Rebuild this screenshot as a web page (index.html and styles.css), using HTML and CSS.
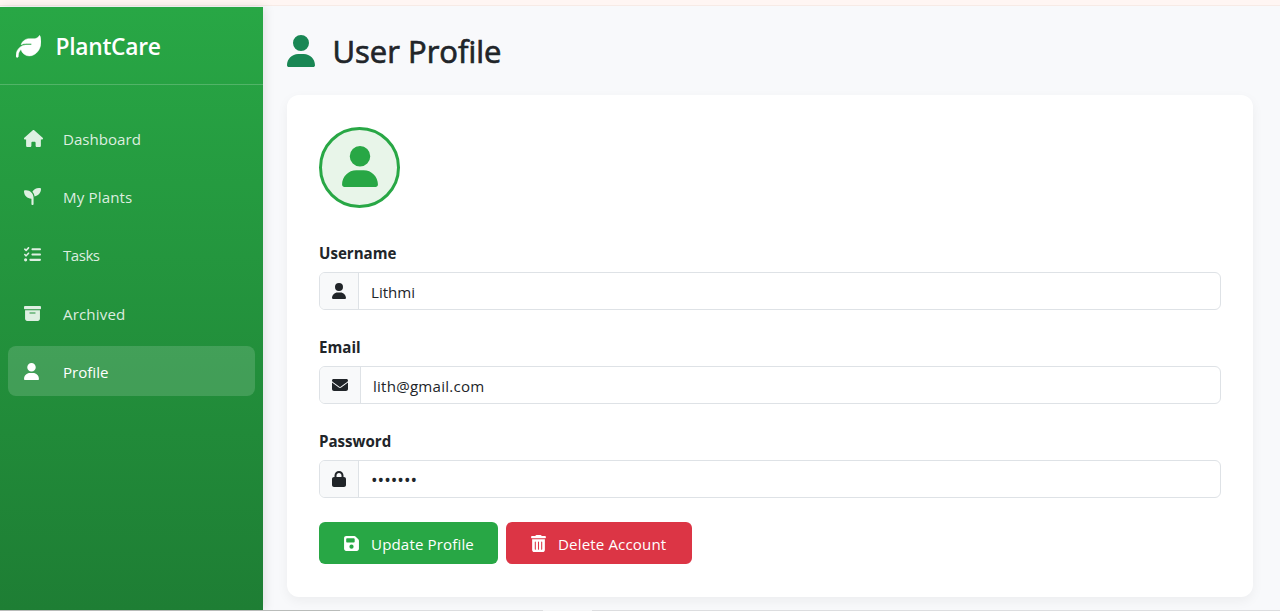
FILE: index.html
```html
<!DOCTYPE html>
<html lang="en">
<head>
<meta charset="utf-8">
<title>PlantCare - User Profile</title>
<link rel="stylesheet" href="styles.css">
</head>
<body>
<svg class="sprite" aria-hidden="true">
  <symbol id="user" viewBox="0 0 448 512"><path d="M224 256A128 128 0 1 0 224 0a128 128 0 1 0 0 256zm-45.700 48C79.800 304 0 383.800 0 482.300C0 498.700 13.300 512 29.700 512H418.300c16.400 0 29.700-13.300 29.700-29.700C448 383.800 368.200 304 269.700 304H178.300z"/></symbol>
  <symbol id="lock" viewBox="0 0 448 512"><path d="M144 144v48H304V144c0-44.200-35.800-80-80-80s-80 35.800-80 80zM80 192V144C80 64.500 144.500 0 224 0s144 64.500 144 144v48h16c35.300 0 64 28.700 64 64V448c0 35.300-28.700 64-64 64H64c-35.300 0-64-28.700-64-64V256c0-35.300 28.700-64 64-64H80z"/></symbol>
  <symbol id="envelope" viewBox="0 0 512 512"><path d="M48 64C21.500 64 0 85.500 0 112c0 15.100 7.100 29.300 19.200 38.400L236.800 313.600c11.400 8.500 27 8.500 38.400 0L492.800 150.400c12.100-9.100 19.200-23.300 19.200-38.400c0-26.500-21.500-48-48-48H48zM0 176V384c0 35.300 28.700 64 64 64H448c35.300 0 64-28.700 64-64V176L294.400 339.200c-22.800 17.100-54 17.100-76.800 0L0 176z"/></symbol>
  <symbol id="save" viewBox="0 0 448 512"><path d="M64 32C28.700 32 0 60.700 0 96V416c0 35.300 28.700 64 64 64H384c35.300 0 64-28.700 64-64V173.300c0-17-6.700-33.300-18.700-45.300L352 50.700C340 38.700 323.700 32 306.700 32H64zm0 96c0-17.700 14.300-32 32-32H288c17.700 0 32 14.300 32 32v64c0 17.700-14.300 32-32 32H96c-17.700 0-32-14.300-32-32V128zM224 288a64 64 0 1 1 0 128 64 64 0 1 1 0-128z"/></symbol>
  <symbol id="trash" viewBox="0 0 448 512"><path d="M135.200 17.700C140.600 6.800 151.700 0 163.800 0H284.200c12.100 0 23.200 6.800 28.600 17.700L320 32h96c17.700 0 32 14.300 32 32s-14.300 32-32 32H32C14.300 96 0 81.700 0 64S14.300 32 32 32h96l7.200-14.300zM32 128H416V448c0 35.300-28.700 64-64 64H96c-35.300 0-64-28.700-64-64V128zm96 64c-8.800 0-16 7.200-16 16V432c0 8.800 7.200 16 16 16s16-7.200 16-16V208c0-8.800-7.200-16-16-16zm96 0c-8.800 0-16 7.200-16 16V432c0 8.800 7.200 16 16 16s16-7.200 16-16V208c0-8.800-7.200-16-16-16zm96 0c-8.800 0-16 7.200-16 16V432c0 8.800 7.200 16 16 16s16-7.200 16-16V208c0-8.800-7.200-16-16-16z"/></symbol>
  <symbol id="archive" viewBox="0 0 512 512"><path d="M32 32H480c17.700 0 32 14.300 32 32V96c0 17.700-14.300 32-32 32H32C14.300 128 0 113.700 0 96V64C0 46.300 14.300 32 32 32zm0 128H480V416c0 35.300-28.700 64-64 64H96c-35.300 0-64-28.700-64-64V160zm128 80c0 8.800 7.200 16 16 16H336c8.800 0 16-7.200 16-16s-7.200-16-16-16H176c-8.800 0-16 7.200-16 16z"/></symbol>
  <symbol id="home" viewBox="0 0 576 512"><path d="M575.800 255.500c0 18-15 32.100-32 32.100h-32l.7 160.200c0 2.700-.2 5.400-.5 8.100V472c0 22.100-17.900 40-40 40H392c-22.100 0-40-17.900-40-40V384c0-17.700-14.300-32-32-32H256c-17.700 0-32 14.300-32 32v88c0 22.100-17.900 40-40 40H104c-22.100 0-40-17.900-40-40V287.600H32c-18 0-32-14-32-32.100c0-9 3-17 10-24L266.400 8c7-7 15-8 22-8s15 2 21 7L564.800 231.500c8 7 12 15 11 24z"/></symbol>
  <symbol id="seedling" viewBox="0 0 512 512"><path d="M512 32c0 113.600-84.600 207.500-194.200 222c-7.100-53.400-30.600-101.600-65.300-139.300C290.800 46.300 364 0 448 0h32c17.700 0 32 14.300 32 32zM0 96C0 78.300 14.300 64 32 64H64c123.700 0 224 100.300 224 224V480c0 17.700-14.300 32-32 32s-32-14.300-32-32V320C100.300 320 0 219.700 0 96z"/></symbol>
  <symbol id="tasks" viewBox="0 0 512 512"><path d="M152.100 38.200c9.900 8.900 10.700 24 1.800 33.900l-72 80c-4.400 4.900-10.600 7.800-17.200 7.900s-12.900-2.400-17.600-7L7 113C-2.300 103.600-2.300 88.400 7 79s24.600-9.400 33.900 0l22.100 22.100 55.100-61.200c8.900-9.900 24-10.700 33.900-1.800zm0 160c9.900 8.900 10.700 24 1.800 33.900l-72 80c-4.400 4.900-10.600 7.800-17.200 7.900s-12.900-2.400-17.600-7L7 273c-9.400-9.400-9.400-24.600 0-33.900s24.600-9.400 33.900 0l22.100 22.100 55.100-61.200c8.900-9.900 24-10.700 33.900-1.800zM224 96c0-17.700 14.300-32 32-32H480c17.700 0 32 14.300 32 32s-14.300 32-32 32H256c-17.700 0-32-14.300-32-32zm0 160c0-17.700 14.300-32 32-32H480c17.700 0 32 14.300 32 32s-14.300 32-32 32H256c-17.700 0-32-14.300-32-32zM160 416c0-17.700 14.300-32 32-32H480c17.700 0 32 14.300 32 32s-14.300 32-32 32H192c-17.700 0-32-14.300-32-32zM48 368a48 48 0 1 1 0 96 48 48 0 1 1 0-96z"/></symbol>
  <symbol id="leaf" viewBox="0 0 512 512"><path d="M272 96c-78.600 0-145.100 51.500-167.700 122.500c33.600-17 71.500-26.500 111.700-26.500h88c8.800 0 16 7.200 16 16s-7.200 16-16 16H216c-16.600 0-32.700 1.900-48.300 5.400c-25.900 5.900-49.900 16.400-71.400 30.700C38.300 298.800 0 364.900 0 440v16c0 13.300 10.700 24 24 24s24-10.700 24-24V440c0-48.700 20.700-92.500 53.800-123.200C121.600 392.300 190.300 448 272 448l1 0c132.100-.7 239-130.900 239-291.400c0-42.600-7.500-83.100-21.100-119.600c-2.600-6.900-12.700-6.600-16.200-.1C455.900 72.100 418.700 96 376 96L272 96z"/></symbol>
</svg>
<div class="page">
  <div class="topbar"></div>
  <div class="layout">
    <aside class="sidebar">
      <div class="brand"><svg class="brand-icon"><use href="#leaf"/></svg><span>PlantCare</span></div>
      <nav class="nav">
        <a class="nav-item"><span class="nav-icon"><svg class="i-home"><use href="#home"/></svg></span><span>Dashboard</span></a>
        <a class="nav-item"><span class="nav-icon"><svg class="i-sq"><use href="#seedling"/></svg></span><span class="plants">My Plants</span></a>
        <a class="nav-item"><span class="nav-icon"><svg class="i-sq"><use href="#tasks"/></svg></span><span class="tasks">Tasks</span></a>
        <a class="nav-item"><span class="nav-icon"><svg class="i-sq"><use href="#archive"/></svg></span><span class="plants">Archived</span></a>
        <a class="nav-item active"><span class="nav-icon"><svg class="i-narrow"><use href="#user"/></svg></span><span>Profile</span></a>
      </nav>
    </aside>
    <main class="main">
      <h1 class="title"><svg class="title-icon"><use href="#user"/></svg><span>User Profile</span></h1>
      <section class="card">
        <div class="avatar"><svg class="avatar-icon"><use href="#user"/></svg></div>
        <div class="field">
          <div class="label">Username</div>
          <div class="group"><span class="addon"><svg class="f-narrow"><use href="#user"/></svg></span><span class="value">Lithmi</span></div>
        </div>
        <div class="field">
          <div class="label">Email</div>
          <div class="group"><span class="addon"><svg class="f-sq"><use href="#envelope"/></svg></span><span class="value email">lith@gmail.com</span></div>
        </div>
        <div class="field last">
          <div class="label">Password</div>
          <div class="group"><span class="addon"><svg class="f-narrow"><use href="#lock"/></svg></span><span class="value dots">•••••••</span></div>
        </div>
        <div class="actions">
          <button class="btn update"><svg class="b-icon"><use href="#save"/></svg><span>Update Profile</span></button>
          <button class="btn delete"><svg class="b-icon"><use href="#trash"/></svg><span>Delete Account</span></button>
        </div>
      </section>
    </main>
  </div>
  <div class="bottom-line"></div>
</div>
</body>
</html>
```
FILE: styles.css
```css
* { box-sizing: border-box; }
body { margin: 0; font-family: "Open Sans", "Noto Sans", sans-serif; font-size: 15.1px; color: #212529; background: #f8f9fa; }
svg { display: block; flex: none; fill: currentColor; }
.sprite { display: none; }
.page { display: flex; flex-direction: column; height: 611px; overflow: hidden; }
.topbar { flex: none; height: 6px; background: #fff6f3; border-bottom: 1px solid #f7ebe6; }
.layout { flex: 1; display: flex; min-height: 0; background: #f8f9fb; padding-top: 1px; }
.bottom-line { flex: none; height: 1px; background: linear-gradient(90deg, #b9bcba 0 340px, #dcdddf 340px 543px, #f4f5f6 543px 592px, #dcdddf 592px); }

.sidebar { width: 263px; flex: none; color: #fff; background: linear-gradient(180deg, #28a745, #1e7e34); box-shadow: 2px 0 10px rgba(0,0,0,.1); }
.brand { display: flex; align-items: center; gap: 14.500px; height: 78px; padding: 2px 16px 0; border-bottom: 1px solid rgba(255,255,255,.2); font-size: 22.8px; font-weight: 600; letter-spacing: -.3px; }
.brand-icon { width: 25px; height: 25px; margin-top: -1px; stroke: currentColor; stroke-width: 10px; }
.nav { display: flex; flex-direction: column; gap: 8.200px; padding: 28px 8px 0; }
.nav-item { display: flex; align-items: center; height: 50px; padding: 2px 0 0 16px; border-radius: 8px; color: rgba(255,255,255,.85); }
.nav-icon { width: 39px; }
.nav-icon svg { margin-top: -1px; }
.plants { letter-spacing: .14px; }
.tasks { letter-spacing: -.5px; }
.active { background: rgba(255,255,255,.15); color: #fff; }
.i-home { width: 19px; height: 17px; }
.i-sq { width: 17px; height: 17px; }
.i-narrow { width: 15px; height: 17px; }

.main { flex: 1; padding: 20px 27px 0 24px; }
.title { display: flex; align-items: center; gap: 17.500px; height: 48px; margin: 0 0 19.500px; font-size: 31px; font-weight: 500; -webkit-text-stroke: .7px currentColor; }
.title-icon { width: 28px; height: 32px; color: #198754; }
.card { height: 502px; padding: 32px; background: #fff; border-radius: 12px; box-shadow: 0 4px 12px rgba(0,0,0,.05); }
.avatar { display: flex; align-items: center; justify-content: center; width: 81px; height: 81px; margin-bottom: 33px; border: 3px solid #28a745; border-radius: 50%; background: #e8f5e9; color: #28a745; }
.avatar-icon { width: 36px; height: 41px; margin-top: -2px; }
.field { margin-bottom: 25px; }
.field.last { margin-bottom: 24.500px; }
.label { height: 24px; margin-bottom: 7px; line-height: 24px; font-weight: 700; font-size: 15.1px; }
.group { display: flex; height: 38px; border: 1px solid #dee2e6; border-radius: 6px; overflow: hidden; background: #fff; }
.addon { display: flex; align-items: center; padding: 0 12px; background: #f8f9fa; border-right: 1px solid #dee2e6; }
.f-narrow { width: 14px; height: 16px; }
.f-sq { width: 16px; height: 16px; }
.value { padding-left: 12px; line-height: 38px; }
.email { letter-spacing: .23px; }
.dots { font-size: 17.5px; }
.actions { display: flex; gap: 8px; }
.btn { display: flex; align-items: center; gap: 12px; height: 42px; padding: 2px 0 0 25px; border: 0; border-radius: 6px; color: #fff; font: inherit; letter-spacing: .13px; white-space: nowrap; }
.b-icon { width: 15px; height: 17px; margin-top: -1px; }
.update { width: 179px; background: #28a745; }
.delete { width: 186px; background: #dc3545; }
```
